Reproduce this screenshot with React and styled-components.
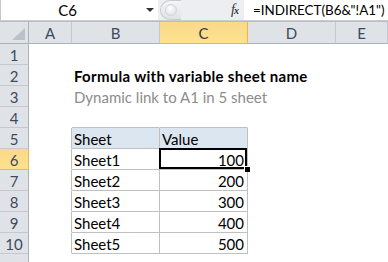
import styled, { createGlobalStyle } from "styled-components";

const GlobalStyle = createGlobalStyle`
  html, body {
    margin: 0;
    padding: 0;
    background: #ffffff;
  }
  body {
    font-family: Lato, "Liberation Sans", sans-serif;
  }
`;

const COLS = [29, 43, 88, 88, 88, 52];
const LETTERS = ["A", "B", "C", "D", "E"];
const GRID = "#c0c0c0";
const HEAD_LINE = "#c5c9cf";

const Window = styled.div`
  width: 388px;
  height: 262px;
  overflow: hidden;
  background: #fff;
  display: flex;
  flex-direction: column;
`;

const FormulaBar = styled.div`
  display: flex;
  height: 20px;
  border-left: 1px solid #c3c7cc;
  border-bottom: 1px solid #c9ccd1;
`;

const NameBox = styled.div`
  width: 157px;
  display: flex;
  align-items: center;
  font-size: 15px;
  color: #000;
`;

const NameText = styled.span`
  flex: 1;
  text-align: center;
  padding-right: 12px;
`;

const DropArrow = styled.span`
  width: 0;
  height: 0;
  border-left: 4px solid transparent;
  border-right: 4px solid transparent;
  border-top: 4px solid #333;
  margin-right: 4px;
`;

const Divider = styled.div`
  width: 86px;
  background: #eceef1;
  display: flex;
  align-items: center;
  justify-content: space-between;
`;

const Grip = styled.div`
  width: 20px;
  height: 18px;
  border-radius: 10px 0 0 10px;
  background: linear-gradient(#f4f5f7, #dfe2e6);
  border: 1px solid #c8cbd0;
  border-right: none;
  display: flex;
  align-items: center;
  justify-content: center;
  margin-left: 2px;

  &::after {
    content: "";
    width: 10px;
    height: 10px;
    border-radius: 50%;
    background: radial-gradient(circle at 40% 35%, #ffffff, #d8dbe0);
    border: 1px solid #d0d3d8;
  }
`;

const Fx = styled.span`
  font-family: "Liberation Serif", serif;
  font-style: italic;
  font-size: 14px;
  color: #333;
  margin-right: 6px;
  letter-spacing: -1px;

  small {
    font-size: 10px;
    font-weight: bold;
  }
`;

const FormulaInput = styled.div`
  flex: 1;
  display: flex;
  align-items: center;
  padding-left: 9px;
  font-size: 13.4px;
  color: #000;
  white-space: nowrap;
  overflow: hidden;
`;

const Spacer = styled.div`
  height: 1px;
  border-bottom: 1px solid #b9bdc3;
`;

const Sheet = styled.div`
  display: grid;
  grid-template-columns: ${COLS.map((w) => `${w}px`).join(" ")};
  grid-auto-rows: 21px;
  grid-template-rows: 22px;
`;

const Corner = styled.div`
  box-sizing: border-box;
  background: #dfe3e8;
  border-right: 1px solid #abb1b9;
  border-bottom: 1px solid #abb1b9;
  position: relative;

  &::after {
    content: "";
    position: absolute;
    right: 3px;
    bottom: 3px;
    width: 0;
    height: 0;
    border-left: 13px solid transparent;
    border-bottom: 12px solid #bcc1c7;
  }
`;

const activeFill = "linear-gradient(#f9d98a, #fde28f)";

const ColHead = styled.div`
  box-sizing: border-box;
  display: flex;
  align-items: center;
  justify-content: center;
  font-size: 15px;
  color: ${({ $active }) => ($active ? "#3a3a3a" : "#3e4a5a")};
  background: ${({ $active }) => ($active ? activeFill : "#dfe3e8")};
  border-right: 1px solid ${({ $active }) => ($active ? "#f2b544" : HEAD_LINE)};
  border-bottom: 1px solid ${({ $active }) => ($active ? "#f2b544" : "#abb1b9")};
`;

const RowHead = styled.div`
  box-sizing: border-box;
  display: flex;
  align-items: flex-end;
  justify-content: center;
  font-size: 15px;
  line-height: 18px;
  color: #3e4a5a;
  background: ${({ $active }) => ($active ? activeFill : "#dfe3e8")};
  border-right: 1px solid ${({ $active }) => ($active ? "#f2b544" : "#abb1b9")};
  border-bottom: 1px solid ${({ $active }) => ($active ? "#f2b544" : HEAD_LINE)};
`;

const Cell = styled.div`
  box-sizing: border-box;
  position: relative;
  display: flex;
  align-items: flex-end;
  justify-content: ${({ $align }) => ($align === "right" ? "flex-end" : "flex-start")};
  padding: 0 3px 0 2px;
  font-size: 15px;
  line-height: 18px;
  white-space: nowrap;
  font-weight: ${({ $bold }) => ($bold ? 700 : 400)};
  letter-spacing: ${({ $bold }) => ($bold ? "0.3px" : "0")};
  color: ${({ $muted }) => ($muted ? "#8c8c8c" : "#000")};
  background: ${({ $fill }) => $fill || "transparent"};
  border-right: 1px solid ${({ $right }) => ($right ? GRID : "transparent")};
  border-bottom: 1px solid ${({ $bottom }) => ($bottom ? GRID : "transparent")};
  z-index: ${({ $selected }) => ($selected ? 2 : 1)};

  ${({ $selected }) =>
    $selected &&
    `
    &::before {
      content: "";
      position: absolute;
      top: -1px;
      left: -1px;
      right: 0;
      bottom: 0;
      border: 2px solid #000;
      pointer-events: none;
    }
    &::after {
      content: "";
      position: absolute;
      right: -3px;
      bottom: -3px;
      width: 5px;
      height: 5px;
      background: #000;
      border: 1px solid #fff;
      border-right: none;
      border-bottom: none;
    }
  `}
`;

const content = {
  "2B": { text: "Formula with variable sheet name", bold: true },
  "3B": { text: "Dynamic link to A1 in 5 sheet", muted: true },
  "5B": { text: "Sheet" },
  "5C": { text: "Value" },
};
[100, 200, 300, 400, 500].forEach((v, i) => {
  content[`${6 + i}B`] = { text: `Sheet${i + 1}` };
  content[`${6 + i}C`] = { text: String(v), align: "right" };
});

const inTable = (r, c) => r >= 5 && r <= 10 && (c === "B" || c === "C");

function SheetCell({ row, col }) {
  const data = content[`${row}${col}`] || {};
  const right = inTable(row, col) || (col === "A" && row >= 5 && row <= 10);
  const bottom = inTable(row, col) || (row === 4 && (col === "B" || col === "C"));
  return (
    <Cell
      $right={right}
      $bottom={bottom}
      $bold={data.bold}
      $muted={data.muted}
      $align={data.align}
      $fill={row === 5 && inTable(row, col) ? "#dce6f1" : null}
      $selected={row === 6 && col === "C"}
    >
      {data.text}
    </Cell>
  );
}

export default function App() {
  const rows = Array.from({ length: 10 }, (_, i) => i + 1);
  return (
    <Window>
      <GlobalStyle />
      <FormulaBar>
        <NameBox>
          <NameText>C6</NameText>
          <DropArrow />
        </NameBox>
        <Divider>
          <Grip />
          <Fx>
            f<small>x</small>
          </Fx>
        </Divider>
        <FormulaInput>=INDIRECT(B6&amp;"!A1")</FormulaInput>
      </FormulaBar>
      <Spacer />
      <Sheet>
        <Corner />
        {LETTERS.map((l) => (
          <ColHead key={l} $active={l === "C"}>
            {l}
          </ColHead>
        ))}
        {rows.map((r) => [
          <RowHead key={`h${r}`} $active={r === 6}>
            {r}
          </RowHead>,
          ...LETTERS.map((l) => <SheetCell key={`${r}${l}`} row={r} col={l} />),
        ])}
        <RowHead />
      </Sheet>
    </Window>
  );
}
